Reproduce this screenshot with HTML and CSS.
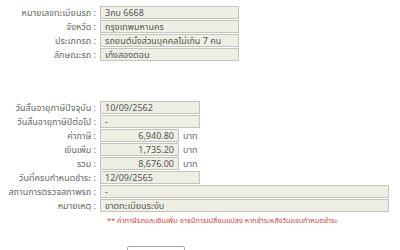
FILE: index.html
```
<!DOCTYPE html>
<html lang="th">

<head>
  <meta charset="UTF-8">
  <title>ข้อมูลภาษีรถ</title>
  <link rel="stylesheet" href="styles.css">
</head>

<body>
  <div class="form">
    <div class="section">
      <div class="row">
        <span class="label">หมายเลขทะเบียนรถ :</span>
        <span class="field mid">3กบ 6668</span>
      </div>
      <div class="row">
        <span class="label">จังหวัด :</span>
        <span class="field mid">กรุงเทพมหานคร</span>
      </div>
      <div class="row">
        <span class="label">ประเภทรถ :</span>
        <span class="field mid">รถยนต์นั่งส่วนบุคคลไม่เกิน 7 คน</span>
      </div>
      <div class="row">
        <span class="label">ลักษณะรถ :</span>
        <span class="field mid">เก๋งสองตอน</span>
      </div>
    </div>

    <div class="section tax">
      <div class="row">
        <span class="label">วันสิ้นอายุภาษีปัจจุบัน :</span>
        <span class="field date">10/09/2562</span>
      </div>
      <div class="row">
        <span class="label">วันสิ้นอายุภาษีปีต่อไป :</span>
        <span class="field date">-</span>
      </div>
      <div class="row">
        <span class="label">ค่าภาษี :</span>
        <span class="field money">6,940.80</span>
        <span class="unit">บาท</span>
      </div>
      <div class="row">
        <span class="label">เงินเพิ่ม :</span>
        <span class="field money">1,735.20</span>
        <span class="unit">บาท</span>
      </div>
      <div class="row">
        <span class="label">รวม :</span>
        <span class="field money">8,676.00</span>
        <span class="unit">บาท</span>
      </div>
      <div class="row">
        <span class="label">วันที่ครบกำหนดชำระ :</span>
        <span class="field date">12/09/2565</span>
      </div>
      <div class="row">
        <span class="label">สถานการตรวจสภาพรถ :</span>
        <span class="field wide">-</span>
      </div>
      <div class="row">
        <span class="label">หมายเหตุ :</span>
        <span class="field wide">ขาดทะเบียนระงับ</span>
      </div>
      <p class="note">** ค่าภาษีรถและเงินเพิ่ม อาจมีการเปลี่ยนแปลง หากชำระหลังวันครบกำหนดชำระ</p>
    </div>

    <div class="actions">
      <button class="close" title="ปิด"></button>
    </div>
  </div>
</body>

</html>
```

FILE: styles.css
```
body {
  margin: 0;
  padding: 0;
  background: #fff;
  font-family: Tahoma, "Noto Sans", "Noto Sans Thai", sans-serif;
  font-size: 9px;
  color: #444;
}

.form {
  padding-top: 6px;
}

.section {
  display: flex;
  flex-direction: column;
  gap: 1px;
}

.tax {
  margin-top: 40px;
}

.row {
  display: flex;
  align-items: center;
  height: 13px;
}

.label {
  width: 100px;
  padding-right: 4px;
  box-sizing: border-box;
  text-align: right;
  color: #666;
  white-space: nowrap;
}

.field {
  height: 13px;
  box-sizing: border-box;
  border: 1px solid #c4c4bc;
  background: #efeee4;
  padding: 0 4px;
  line-height: 11px;
  color: #555;
  white-space: nowrap;
  overflow: hidden;
}

.mid {
  width: 139px;
}

.date {
  width: 100px;
}

.money {
  width: 79px;
  text-align: right;
}

.wide {
  width: 289px;
}

.unit {
  padding-left: 4px;
  color: #666;
}

.note {
  margin: 2px 0 0 107px;
  color: #d04040;
  font-size: 7.4px;
}

.actions {
  padding: 20px 0 0 127px;
}

.close {
  display: block;
  width: 58px;
  height: 20px;
  border: 1px solid #a8a8a8;
  border-radius: 2px;
  background: #fff;
}
```
